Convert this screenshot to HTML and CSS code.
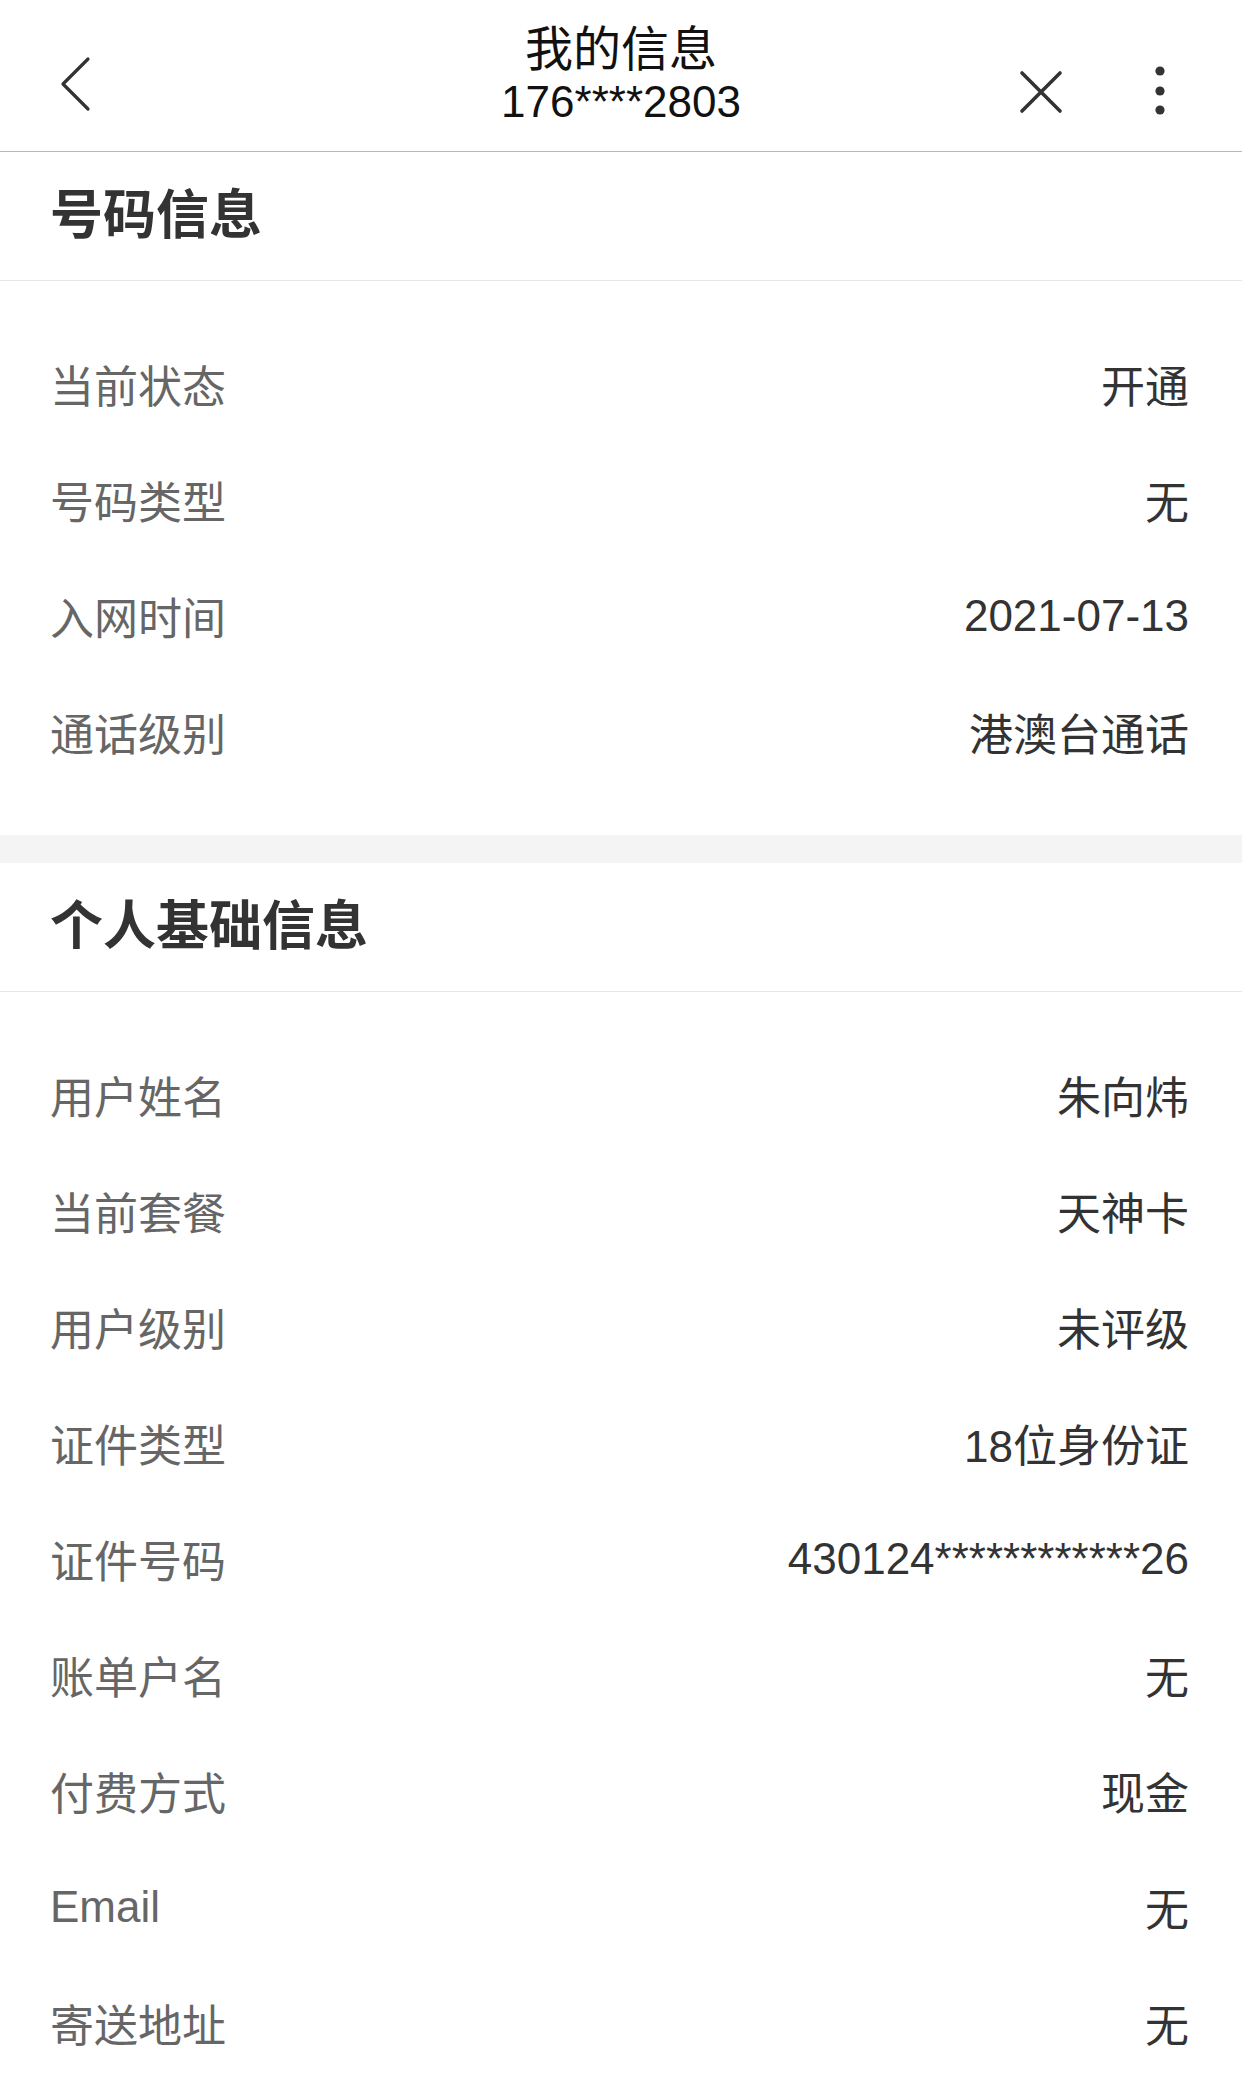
FILE: index.html
```html
<!DOCTYPE html>
<html lang="zh-CN">
  <head>
    <meta charset="UTF-8" />
    <meta name="viewport" content="width=device-width, initial-scale=1.0" />
    <title>我的信息</title>
    <link rel="stylesheet" href="styles.css">
  </head>
  <body>
    <div class="header">
      <div class="header-left">
        <svg class="icon-back" width="60" height="60" viewBox="0 0 60 60">
          <path d="M43 5 L18 30 L43 55" fill="none" stroke="#333" stroke-width="3.2" stroke-linecap="round" stroke-linejoin="round" />
        </svg>
      </div>
      <div class="header-title">
        <div class="title">我的信息</div>
        <div class="subtitle">176****2803</div>
      </div>
      <div class="header-right">
        <svg class="icon-close" width="60" height="60" viewBox="0 0 60 60">
          <path d="M11 12 L49 50 M49 12 L11 50" fill="none" stroke="#333" stroke-width="3.6" stroke-linecap="round" />
        </svg>
        <svg class="icon-more" width="30" height="60" viewBox="0 0 30 60">
          <circle cx="15" cy="10" r="4.6" fill="#333" />
          <circle cx="15" cy="30" r="4.6" fill="#333" />
          <circle cx="15" cy="49" r="4.6" fill="#333" />
        </svg>
      </div>
    </div>

    <div class="section">
      <div class="section-title">号码信息</div>
      <div class="list">
        <div class="row"><span class="label">当前状态</span><span class="value">开通</span></div>
        <div class="row"><span class="label">号码类型</span><span class="value">无</span></div>
        <div class="row"><span class="label">入网时间</span><span class="value">2021-07-13</span></div>
        <div class="row"><span class="label">通话级别</span><span class="value">港澳台通话</span></div>
      </div>
    </div>

    <div class="gap"></div>

    <div class="section">
      <div class="section-title">个人基础信息</div>
      <div class="list">
        <div class="row"><span class="label">用户姓名</span><span class="value">朱向炜</span></div>
        <div class="row"><span class="label">当前套餐</span><span class="value">天神卡</span></div>
        <div class="row"><span class="label">用户级别</span><span class="value">未评级</span></div>
        <div class="row"><span class="label">证件类型</span><span class="value">18位身份证</span></div>
        <div class="row"><span class="label">证件号码</span><span class="value">430124************26</span></div>
        <div class="row"><span class="label">账单户名</span><span class="value">无</span></div>
        <div class="row"><span class="label">付费方式</span><span class="value">现金</span></div>
        <div class="row"><span class="label">Email</span><span class="value">无</span></div>
        <div class="row"><span class="label">寄送地址</span><span class="value">无</span></div>
      </div>
    </div>
  </body>
</html>
```

FILE: styles.css
```css
body {
  font-family: "Liberation Sans", "Noto Sans CJK SC", sans-serif;
  background: #fff;
  margin: 0;
  color: #333;
}
.header {
  display: grid;
  grid-template-columns: 1fr auto 1fr;
  height: 151px;
  border-bottom: 1px solid #b8b8b8;
}
.header-left {
  padding: 54px 0 0 45px;
}
.header-left svg,
.header-right svg {
  display: block;
}
.header-title {
  padding-top: 23px;
  text-align: center;
}
.title {
  font-size: 48px;
  line-height: 54px;
  color: #111;
}
.subtitle {
  font-size: 44px;
  line-height: 50px;
  color: #111;
}
.header-right {
  display: flex;
  justify-content: flex-end;
  align-items: flex-start;
  gap: 74px;
  padding: 61px 67px 0 0;
}
.section-title {
  height: 128px;
  line-height: 128px;
  padding: 0 50px;
  font-size: 53px;
  font-weight: 700;
  color: #333;
  border-bottom: 1px solid #e6e6e6;
}
.list {
  padding: 45px 53px 45px 50px;
}
.row {
  display: flex;
  justify-content: space-between;
  align-items: center;
  height: 116px;
  font-size: 44px;
}
.label {
  color: #666;
}
.value {
  color: #333;
}
.gap {
  height: 28px;
  background: #f4f4f4;
}
```
